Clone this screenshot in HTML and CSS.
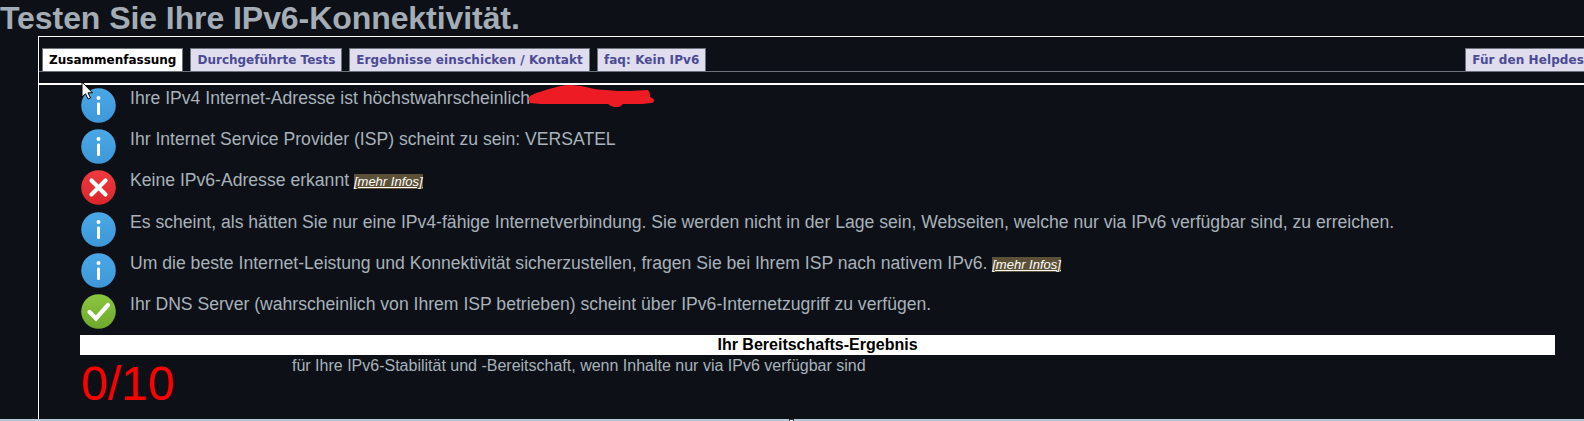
FILE: index.html
```html
<!DOCTYPE html>
<html lang="de">
<head>
<meta charset="utf-8">
<title>Testen Sie Ihre IPv6-Konnektivität.</title>
<link rel="stylesheet" href="styles.css">
</head>
<body>
<h1 class="title">Testen Sie Ihre IPv6-Konnektivität.</h1>
<main class="panel">
  <nav class="tabs">
    <a class="tab active">Zusammenfassung</a>
    <a class="tab">Durchgeführte Tests</a>
    <a class="tab wide">Ergebnisse einschicken / Kontakt</a>
    <a class="tab wide">faq: Kein IPv6</a>
    <a class="tab wide right">Für den Helpdesk</a>
  </nav>
  <section class="content">
    <ul class="results">
      <li class="row"><svg class="icon"><use href="#i-info"/></svg><span class="msg">Ihre IPv4 Internet-Adresse ist höchstwahrscheinlich<svg class="scribble" viewBox="0 0 126 22"><path d="M0 13C4 9 8 8 12 7C17 5 20 4 25 3C31 1 36 0 42 0C48 0 53 1 58 2C65 4 71 5 78 5C86 6 94 6 102 6C108 6 114 5 120 5C122 7 122 10 122 12C124 13 126 14 126 15C126 17 125 18 123 18C117 19 111 19 105 19L95 19C93 21 92 22 90 22C87 22 85 22 83 21L80 19C72 19 65 19 58 19C47 19 36 19 25 19C17 19 9 19 2 18Z"/></svg></span></li>
      <li class="row"><svg class="icon"><use href="#i-info"/></svg><span class="msg">Ihr Internet Service Provider (ISP) scheint zu sein: VERSATEL</span></li>
      <li class="row"><svg class="icon"><use href="#i-err"/></svg><span class="msg">Keine IPv6-Adresse erkannt <a class="more">[mehr Infos]</a></span></li>
      <li class="row"><svg class="icon"><use href="#i-info"/></svg><span class="msg">Es scheint, als hätten Sie nur eine IPv4-fähige Internetverbindung. Sie werden nicht in der Lage sein, Webseiten, welche nur via IPv6 verfügbar sind, zu erreichen.</span></li>
      <li class="row"><svg class="icon"><use href="#i-info"/></svg><span class="msg">Um die beste Internet-Leistung und Konnektivität sicherzustellen, fragen Sie bei Ihrem ISP nach nativem IPv6. <a class="more">[mehr Infos]</a></span></li>
      <li class="row"><svg class="icon"><use href="#i-ok"/></svg><span class="msg">Ihr DNS Server (wahrscheinlich von Ihrem ISP betrieben) scheint über IPv6-Internetzugriff zu verfügen.</span></li>
    </ul>
    <div class="score-head">Ihr Bereitschafts-Ergebnis</div>
    <div class="score">
      <div class="score-num">0/10</div>
      <div class="score-text">für Ihre IPv6-Stabilität und -Bereitschaft, wenn Inhalte nur via IPv6 verfügbar sind</div>
    </div>
  </section>
</main>
<div class="strip"><span class="strip-mark"></span></div>
<svg class="cursor" viewBox="0 0 12 19"><path d="M1 1V16L4.5 12.8L7 18L9.5 17L7 11.8H11.5Z"/></svg>
<svg class="defs" aria-hidden="true">
  <defs>
    <linearGradient id="gb" x1="0" y1="0" x2="0" y2="1"><stop offset="0" stop-color="#4aa8e6"/><stop offset="1" stop-color="#3f97d8"/></linearGradient>
    <linearGradient id="gr" x1="0" y1="0" x2="0" y2="1"><stop offset="0" stop-color="#ef3a3f"/><stop offset="1" stop-color="#d9252b"/></linearGradient>
    <linearGradient id="gg" x1="0" y1="0" x2="0" y2="1"><stop offset="0" stop-color="#8cc63f"/><stop offset="1" stop-color="#6fa82e"/></linearGradient>
    <symbol id="i-info" viewBox="0 0 35 35"><circle cx="17.5" cy="17.5" r="17.3" fill="url(#gb)"/><circle cx="17.5" cy="10" r="2" fill="#fff"/><rect x="16" y="14.5" width="3" height="12.5" rx="1.3" fill="#fff"/></symbol>
    <symbol id="i-err" viewBox="0 0 35 35"><circle cx="17.5" cy="17.5" r="17.3" fill="url(#gr)"/><path d="M10.5 10.5L24.5 24.5M24.5 10.5L10.5 24.5" stroke="#fff" stroke-width="4.2" stroke-linecap="round"/></symbol>
    <symbol id="i-ok" viewBox="0 0 35 35"><circle cx="17.5" cy="17.5" r="17.3" fill="url(#gg)"/><path d="M8.5 18L15 24.5L27 11" fill="none" stroke="#fff" stroke-width="4.2" stroke-linecap="round"/></symbol>
  </defs>
</svg>
</body>
</html>
```
FILE: styles.css
```css
* { box-sizing: border-box; }
html, body { margin: 0; height: 421px; overflow: hidden; }
body { background: #0d1117; color: #a9b1bb; font-family: "Liberation Sans", Arial, sans-serif; position: relative; }
.title { margin: 0; height: 36px; font-size: 32px; line-height: 36px; font-weight: 700; letter-spacing: -0.07px; color: #a4acb6; white-space: nowrap; }
.panel { margin-left: 38px; border-left: 1px solid #fff; border-top: 1px solid #fff; height: 385px; }
.tabs { display: flex; gap: 7px; align-items: flex-end; height: 35px; padding: 11px 0 0 3px; border-bottom: 1px solid #6d717c; white-space: nowrap; overflow: hidden; }
.tab { display: block; height: 23px; padding: 0 6px; background: #dfddee; border: 1px solid #6d717c; border-bottom: 0; color: #4b4a94; font-family: "DejaVu Sans", Verdana, sans-serif; font-size: 12px; font-weight: 700; line-height: 22px; flex: none; }
.tab.wide { letter-spacing: 0.08px; }
.tab.active { background: #fff; color: #000; }
.tab.right { margin-left: auto; margin-right: -15px; }
.content { margin-top: 11px; border-top: 2px solid #fff; padding: 3px 29px 0 41px; }
.results { list-style: none; margin: 0; padding: 0; display: flex; flex-direction: column; gap: 6.2px; }
.row { display: flex; gap: 14px; height: 35px; padding-left: 1px; }
.icon { width: 35px; height: 35px; flex: none; }
.msg { font-size: 17.6px; line-height: 21px; display: block; white-space: nowrap; position: relative; }
.more { font-size: 13px; font-style: italic; text-decoration: underline; color: #fff; background: #5c5036; }
.scribble { position: absolute; left: 398px; top: -3px; width: 126px; height: 22px; }
.scribble path { fill: #ed1c24; }
.score-head { margin-top: 6px; height: 20px; background: #fff; color: #000; font-size: 16px; font-weight: 700; line-height: 20px; text-align: center; }
.score { display: grid; grid-template-columns: 212px 1fr; }
.score-num { font-size: 48px; line-height: 56px; color: #f00; padding: 1px 0 0 1px; }
.score-text { font-size: 16px; line-height: 20px; padding-top: 1px; }
.strip { position: absolute; left: 0; right: 0; top: 419px; height: 2px; background: #b9c6d8; }
.strip-mark { position: absolute; left: 789px; top: 0; width: 5px; height: 2px; background: #fff; border: 1px solid #333; border-bottom: 0; }
.cursor { position: absolute; left: 81px; top: 81px; width: 12px; height: 19px; }
.cursor path { fill: #fff; stroke: #000; stroke-width: 1; }
.defs { position: absolute; width: 0; height: 0; }
```
